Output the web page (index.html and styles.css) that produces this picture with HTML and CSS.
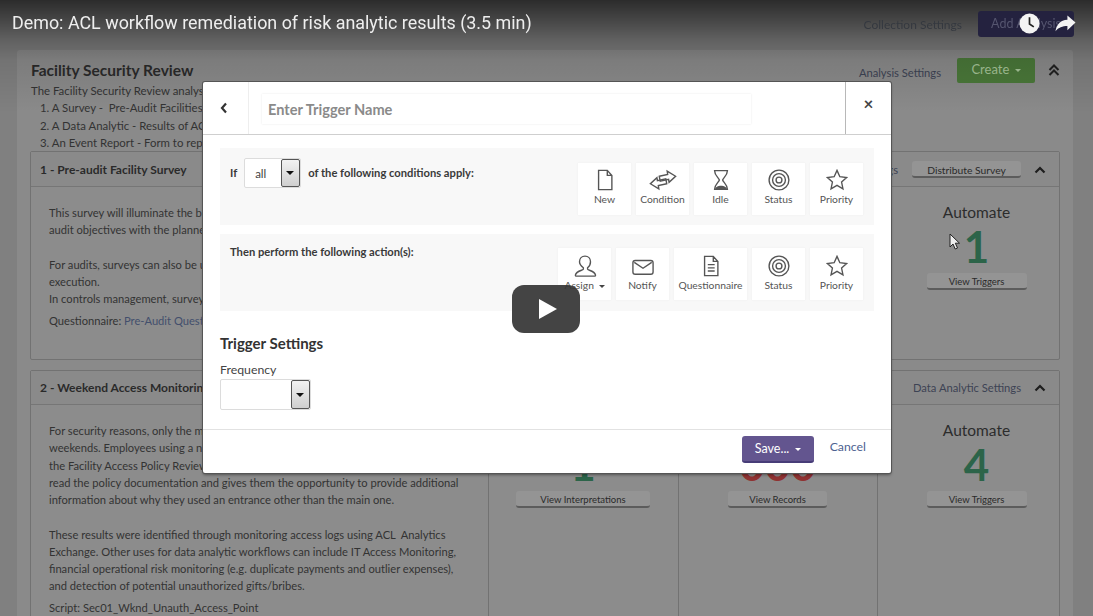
FILE: index.html
```html
<!DOCTYPE html>
<html lang="en">
<head>
	<meta charset="UTF-8">
	<title>Demo: ACL workflow remediation of risk analytic results</title>
	<link rel="stylesheet" href="styles.css">
</head>
<body>
	<svg class="defs" width="0" height="0">
		<symbol id="i-star" viewBox="0 0 24 24"><path d="M12 1.500l3.100 6.900 7.400.9-5.500 5 1.500 7.300-6.500-3.700-6.500 3.700 1.500-7.300-5.500-5 7.400-.9z"/></symbol>
		<symbol id="i-target" viewBox="0 0 24 24"><circle cx="12" cy="12" r="10.800"/><circle cx="12" cy="12" r="7"/><circle cx="12" cy="12" r="3.200"/></symbol>
		<symbol id="i-up" viewBox="0 0 12 8"><path d="M1.500 6.500L6 2l4.500 4.500"/></symbol>
	</svg>

	<div class="screen">
		<div class="topbar">
			<a class="link">Collection Settings</a>
			<span class="btn-add">Add Analysis</span>
		</div>

		<div class="card">
			<div class="card-head">
				<h1>Facility Security Review</h1>
				<a class="link">Analysis Settings</a>
				<span class="btn-create">Create <i class="caret"></i></span>
				<svg class="chev-double" viewBox="0 0 12 12"><path d="M1.500 6L6 1.500 10.500 6M1.500 11L6 6.500l4.500 4.500"/></svg>
			</div>
			<div class="desc">The Facility Security Review analysis</div>
			<div class="desc indent">1. A Survey -&nbsp; Pre-Audit Facilities</div>
			<div class="desc indent">2. A Data Analytic - Results of ACL</div>
			<div class="desc indent">3. An Event Report - Form to report</div>

			<div class="panel panel-one">
				<div class="panel-head">
					<h2>1 - Pre-audit Facility Survey</h2>
					<a class="link dim">Survey Settings</a>
					<span class="btn-gray btn-dist">Distribute Survey</span>
					<svg class="chev"><use href="#i-up"/></svg>
				</div>
				<div class="panel-body">
					<div class="col-text">
						<p>This survey will illuminate the b<br>audit objectives with the planne</p>
						<p>For audits, surveys can also be u<br>execution.<br>In controls management, survey</p>
						<p class="meta">Questionnaire: <a class="blue">Pre-Audit Questionnaire</a></p>
					</div>
					<div class="col"></div>
					<div class="col"></div>
					<div class="col col-last">
						<div class="col-title">Automate</div>
						<div class="num green">1</div>
						<span class="btn-gray btn-view">View Triggers</span>
					</div>
				</div>
			</div>

			<div class="panel panel-two">
				<div class="panel-head">
					<h2>2 - Weekend Access Monitoring</h2>
					<a class="link">Data Analytic Settings</a>
					<svg class="chev"><use href="#i-up"/></svg>
				</div>
				<div class="panel-body">
					<div class="col-text">
						<p>For security reasons, only the m<br>weekends. Employees using a n<br>the Facility Access Policy Review<br>read the policy documentation and gives them the opportunity to provide additional<br>information about why they used an entrance other than the main one.</p>
						<p>These results were identified through monitoring access logs using ACL&nbsp; Analytics<br>Exchange. Other uses for data analytic workflows can include IT Access Monitoring,<br>financial operational risk monitoring (e.g. duplicate payments and outlier expenses),<br>and detection of potential unauthorized gifts/bribes.</p>
						<p class="meta">Script: Sec01_Wknd_Unauth_Access_Point</p>
					</div>
					<div class="col">
						<div class="col-title">&nbsp;</div>
						<div class="num green">1</div>
						<span class="btn-gray btn-interp">View Interpretations</span>
					</div>
					<div class="col">
						<div class="col-title">&nbsp;</div>
						<div class="num red">000</div>
						<span class="btn-gray btn-rec">View Records</span>
					</div>
					<div class="col col-last">
						<div class="col-title">Automate</div>
						<div class="num green">4</div>
						<span class="btn-gray btn-view">View Triggers</span>
					</div>
				</div>
			</div>
		</div>

		<svg class="cursor" viewBox="0 0 12 18"><path d="M1 1v13l3-3 2.200 5 2.300-1-2.200-4.800H10.500z"/></svg>

		<div class="shade"></div>

		<div class="modal">
			<div class="modal-head">
				<div class="modal-back"><svg viewBox="0 0 8 12"><path d="M6 1.500L2 6l4 4.500"/></svg></div>
				<div class="modal-name"><span class="name-input">Enter Trigger Name</span></div>
				<div class="modal-close">&times;</div>
			</div>
			<div class="modal-body">
				<div class="rule">
					<span class="rule-text">If</span>
					<span class="pick pick-all"><span class="pick-val">all</span><span class="pick-arrow"></span></span>
					<span class="rule-text">of the following conditions apply:</span>
					<div class="tiles">
						<div class="tile">
							<svg class="ic" viewBox="0 0 24 24"><path d="M5 1.500h9.500L19.500 7v15.500H5zM14.500 1.500V7h5"/></svg>
							New
						</div>
						<div class="tile">
							<svg class="ic ic-wide" viewBox="0 0 30 22"><path d="M19 15l-9 2 .5 3.500L1.500 15l7-6.500.5 3.200 9-2z"/><path d="M11 7l9-2-.5-3.500 9 5.500-7 6.500-.5-3.200-9 2z"/></svg>
							Condition
						</div>
						<div class="tile">
							<svg class="ic" viewBox="0 0 24 24"><path d="M5 1.800h14c0 5.200-4.600 7.700-5.200 10.200.6 2.500 5.200 5 5.200 10.200H5c0-5.200 4.600-7.700 5.200-10.200C9.600 9.500 5 7 5 1.800z"/><path class="solid" d="M5.500 22c.3-2.200 3.300-3.800 6.500-3.800s6.200 1.600 6.500 3.800z"/></svg>
							Idle
						</div>
						<div class="tile">
							<svg class="ic"><use href="#i-target"/></svg>
							Status
						</div>
						<div class="tile">
							<svg class="ic"><use href="#i-star"/></svg>
							Priority
						</div>
					</div>
				</div>
				<div class="rule rule-then">
					<span class="rule-text then-text">Then perform the following action(s):</span>
					<div class="tiles">
						<div class="tile">
							<svg class="ic ic-wide" viewBox="0 0 26 24"><path d="M13 1.200c3.500 0 6 2.600 6 6.200 0 3-1.600 5.300-3.200 6.600v1.500c0 1.200 7.700 1.500 8.700 6.500 0 .7-.5 1-1 1H3.500c-.5 0-1-.3-1-1 1-5 8.700-5.300 8.700-6.500V14C9.600 12.700 7 10.400 7 7.400c0-3.600 2.500-6.200 6-6.200z"/></svg>
							<span>Assign <i class="caret dark"></i></span>
						</div>
						<div class="tile">
							<svg class="ic ic-wide" viewBox="0 0 26 24"><rect x="2" y="6" width="22" height="15" rx="2.500"/><path d="M3.500 8l9.500 6.500L22.500 8"/></svg>
							Notify
						</div>
						<div class="tile tile-wide">
							<svg class="ic" viewBox="0 0 24 24"><path d="M5 1.500h9.500L19.500 7v15.500H5zM14.500 1.500V7h5M8.500 10.500h7.500M8.500 14h7.500M8.500 17.500h7.500"/></svg>
							Questionnaire
						</div>
						<div class="tile">
							<svg class="ic"><use href="#i-target"/></svg>
							Status
						</div>
						<div class="tile">
							<svg class="ic"><use href="#i-star"/></svg>
							Priority
						</div>
					</div>
				</div>
				<h3>Trigger Settings</h3>
				<div class="field-label">Frequency</div>
				<span class="pick pick-freq"><span class="pick-val"></span><span class="pick-arrow"></span></span>
			</div>
			<div class="modal-foot">
				<span class="btn-save">Save... <i class="caret"></i></span>
				<a class="cancel">Cancel</a>
			</div>
		</div>
	</div>

	<!-- video player chrome -->
	<div class="yt-title">Demo: ACL workflow remediation of risk analytic results (3.5 min)</div>
	<svg class="yt-clock" viewBox="0 0 22 22"><circle cx="11" cy="11" r="10.500"/><path d="M11 4.500V11.500l4.500 3"/></svg>
	<svg class="yt-share" viewBox="0 0 22 17"><path d="M21.500 7.500L13 0v4.500C5.500 4.800 1.500 10 .5 16.500 3.500 12.500 8 11 13 11v4.500z"/></svg>
	<div class="yt-play"><svg viewBox="0 0 18 20"><path d="M0 0l18 10L0 20z"/></svg></div>
</body>
</html>
```

FILE: styles.css
```css
html, body {
	margin: 0;
	height: 616px;
	overflow: hidden;
}
body {
	position: relative;
	background: #808080;
	font-family: Lato, "Open Sans", sans-serif;
	font-size: 12px;
	color: #303030;
}
.defs {
	position: absolute;
}
.screen {
	height: 616px;
	filter: blur(0.35px);
}

/* dimmed page behind the dialog */
.topbar {
	position: relative;
	z-index: 1;
	display: flex;
	justify-content: flex-end;
	align-items: center;
	gap: 16px;
	height: 26px;
	padding: 11px 19px 13px 0;
}
.link {
	color: #3d4354;
	font-size: 11.200px;
	white-space: nowrap;
}
.topbar .link {
	font-size: 12px;
	color: #34383f;
}
.btn-add {
	width: 96px;
	height: 26px;
	line-height: 25px;
	text-align: center;
	border-radius: 3px;
	background: #24223f;
	color: #55556f;
	font-size: 12.500px;
}
.card {
	height: 558px;
	margin: 0 20px 0 17px;
	padding: 8px 13px 0 13px;
	background: #8a8a8a;
	border-radius: 3px 3px 0 0;
}
.card-head {
	display: flex;
	align-items: center;
	height: 24px;
}
.card-head h1 {
	flex: 1;
	margin: 0 0 0 1px;
	font-size: 15.500px;
	font-weight: 700;
	color: #2a2a2a;
}
.card-head .link {
	margin-top: 4px;
}
.btn-create {
	width: 78px;
	height: 25px;
	line-height: 23px;
	margin-left: 16px;
	text-align: center;
	border-radius: 2px;
	background: #4a7839;
	color: #a6c498;
	font-size: 13px;
}
.chev-double {
	width: 12px;
	height: 12px;
	margin: 0 0 0 13px;
	fill: none;
	stroke: #222;
	stroke-width: 2;
}
.desc {
	height: 17.300px;
	line-height: 17.300px;
	padding-left: 1px;
	font-size: 11.400px;
	white-space: nowrap;
	color: #333;
}
.indent {
	padding-left: 10px;
}
.panel {
	border: 1px solid #727272;
	border-radius: 2px;
	background: #8c8c8c;
}
.panel-one {
	height: 207px;
	margin-bottom: 10px;
}
.panel-head {
	display: flex;
	align-items: center;
	height: 35px;
	padding: 1px 13px 0 9px;
	box-sizing: border-box;
	border-bottom: 1px solid #767676;
	background: #8a8a8a;
}
.panel-two .panel-head {
	height: 34px;
	padding-top: 0;
}
.panel-head h2 {
	flex: 1;
	margin: 0;
	font-size: 12px;
	font-weight: 700;
	color: #2a2a2a;
}
.panel-head .link {
	margin-right: 12px;
}
.chev {
	width: 12px;
	height: 8px;
	fill: none;
	stroke: #1e1e1e;
	stroke-width: 2.200;
	margin-left: 1px;
}
.panel-one .chev {
	margin-left: 13px;
}
.panel-head .dim {
	margin-right: 14px;
}
.panel-body {
	display: grid;
	grid-template-columns: 457px 190px 199px 1fr;
	height: 100%;
}
.col-text {
	padding: 17px 0 0 18px;
	line-height: 17.250px;
	font-size: 11.170px;
	white-space: nowrap;
	color: #333;
}
.col-text p {
	margin: 0 0 17.250px;
}
.col-text .meta {
	margin-top: -13px;
}
.blue {
	color: #434f6c;
}
.col {
	display: flex;
	flex-direction: column;
	align-items: center;
	padding: 15px 1px 0 0;
	border-left: 1px solid #727272;
}
.col-last {
	padding-left: 17px;
}
.col-title {
	height: 20px;
	line-height: 20px;
	font-size: 15.500px;
	color: #2c2c2c;
}
.num {
	height: 44px;
	line-height: 44px;
	margin: 2px 0 5px;
	font-size: 44px;
	font-weight: 700;
}
.green {
	color: #2c6449;
}
.red {
	color: #8f3232;
}
.btn-gray {
	display: block;
	height: 14px;
	padding-top: 1px;
	line-height: 16px;
	text-align: center;
	border-radius: 3px;
	border-bottom: 2px solid #5c5c5c;
	background: #949494;
	color: #2a2a2a;
	font-size: 9.500px;
}
.btn-view {
	width: 100px;
}
.btn-interp {
	width: 134px;
}
.btn-rec {
	width: 99px;
}
.btn-dist {
	width: 109px;
	font-size: 10.300px;
}
.cursor {
	position: absolute;
	left: 949px;
	top: 233px;
	width: 12px;
	height: 18px;
	fill: #eee;
	stroke: #222;
	stroke-width: 1;
}

/* video gradient sits over the page, dialog stays clear of it */
.shade {
	position: absolute;
	left: 0;
	top: 0;
	width: 100%;
	height: 112px;
	background: linear-gradient(rgba(0, 0, 0, 0.66), rgba(0, 0, 0, 0.42) 21%, rgba(0, 0, 0, 0.24) 36%, rgba(0, 0, 0, 0.1) 54%, rgba(0, 0, 0, 0));
}

/* dialog */
.modal {
	position: absolute;
	left: 203px;
	top: 82px;
	width: 688px;
	height: 391px;
	background: #fff;
	border-radius: 2px;
	box-shadow: 0 0 0 1px #555, 0 2px 3px rgba(0, 0, 0, 0.4);
	color: #333;
}
.modal-head {
	display: flex;
	height: 52px;
	border-bottom: 1px solid #cfcfcf;
}
.modal-back {
	display: flex;
	align-items: center;
	justify-content: center;
	width: 46px;
	padding: 0 4px 0 0;
	box-sizing: border-box;
	border-right: 1px solid #eee;
}
.modal-back svg {
	width: 8px;
	height: 12px;
	fill: none;
	stroke: #333;
	stroke-width: 2.200;
}
.modal-name {
	flex: 1;
	padding: 12px 0 0 13px;
}
.name-input {
	display: block;
	width: 483px;
	height: 30px;
	line-height: 31px;
	padding-left: 6px;
	box-shadow: 0 0 2px #e8e8e8;
	font-size: 14.600px;
	font-weight: 700;
	color: #8a8a8a;
}
.modal-close {
	width: 45px;
	padding-top: 9px;
	border-left: 1px solid #b8b8b8;
	text-align: center;
	font-size: 17px;
	line-height: 25px;
	font-weight: 700;
	color: #444;
}
.modal-body {
	height: 281px;
	padding: 13px 17px 0;
	border-bottom: 1px solid #e2e2e2;
}
.rule {
	display: flex;
	align-items: flex-start;
	gap: 7px;
	height: 77px;
	margin-bottom: 9px;
	padding: 10px 11px 0 10px;
	box-sizing: border-box;
	background: #f8f8f8;
}
.rule-text {
	margin-top: 8px;
	font-size: 11.200px;
	font-weight: 700;
	color: #3a3a3a;
	white-space: nowrap;
}
.rule .then-text {
	margin-top: 1px;
}
.pick {
	display: flex;
	height: 30px;
	box-sizing: border-box;
	border: 1px solid #dcdcdc;
	border-radius: 2px;
	background: #fff;
}
.pick-all {
	width: 57px;
}
.pick-freq {
	width: 91px;
	height: 31px;
}
.pick-val {
	flex: 1;
	padding-left: 10px;
	line-height: 30px;
	font-size: 11.500px;
	color: #444;
}
.pick-arrow {
	position: relative;
	width: 17px;
	border: 1px solid #555;
	border-radius: 2px;
	background: linear-gradient(#f2f2f2, #cfcfcf);
}
.pick-arrow:after {
	content: "";
	position: absolute;
	left: 4px;
	top: 50%;
	margin-top: -2px;
	border: 4px solid transparent;
	border-top: 4px solid #111;
	border-bottom: 0;
}
.tiles {
	display: flex;
	gap: 5px;
	margin: 5px 0 0 auto;
}
.rule-then .tiles {
	margin-top: 4px;
}
.rule-then .tile {
	padding-top: 7px;
}
.tile {
	display: flex;
	flex-direction: column;
	align-items: center;
	width: 53px;
	height: 52px;
	padding-top: 6px;
	box-sizing: border-box;
	background: #fff;
	box-shadow: 0 0 2px #eee;
	font-size: 10.300px;
	line-height: 15px;
	color: #555;
	white-space: nowrap;
}
.tile-wide {
	width: 73px;
}
.ic {
	width: 22px;
	height: 22px;
	margin-bottom: 1px;
	fill: none;
	stroke: #555;
	stroke-width: 1.500;
	flex: none;
}
.ic-wide {
	width: 28px;
}
.ic .solid {
	fill: #555;
	stroke: none;
}
h3 {
	margin: 22px 0 0;
	height: 20px;
	line-height: 20px;
	font-size: 15px;
	font-weight: 700;
	color: #333;
}
.field-label {
	margin: 7px 0 1px;
	height: 18px;
	line-height: 19px;
	font-size: 12.300px;
	color: #444;
}
.modal-foot {
	display: flex;
	align-items: flex-start;
	justify-content: flex-end;
	gap: 16px;
	padding: 6px 25px 0 0;
}
.btn-save {
	width: 72px;
	height: 25px;
	line-height: 25px;
	text-align: center;
	border-radius: 3px;
	border-bottom: 2px solid #473d78;
	background: #63558f;
	color: #fff;
	font-size: 12.500px;
}
.cancel {
	margin-top: 1px;
	line-height: 20px;
	font-size: 12.300px;
	color: #4d6291;
}
.caret {
	display: inline-block;
	margin-left: 2px;
	vertical-align: middle;
	border: 3.500px solid transparent;
	border-top: 3.500px solid currentColor;
	border-bottom: 0;
}
.caret.dark {
	color: #444;
}

/* player chrome */
.yt-title {
	position: absolute;
	left: 12px;
	top: 11px;
	font-family: Roboto, sans-serif;
	font-size: 17.900px;
	line-height: 24px;
	color: #eee;
	white-space: nowrap;
}
.yt-clock {
	position: absolute;
	left: 1019px;
	top: 13px;
	width: 21px;
	height: 21px;
	fill: #f4f4f4;
	stroke: none;
}
.yt-clock path {
	fill: none;
	stroke: #222;
	stroke-width: 1.800;
}
.yt-share {
	position: absolute;
	left: 1055px;
	top: 15px;
	width: 21px;
	height: 17px;
	fill: #f4f4f4;
}
.yt-play {
	position: absolute;
	left: 512px;
	top: 285px;
	display: flex;
	align-items: center;
	justify-content: center;
	width: 68px;
	height: 48px;
	padding-left: 4px;
	box-sizing: border-box;
	border-radius: 12px;
	background: rgba(52, 52, 52, 0.92);
}
.yt-play svg {
	width: 18px;
	height: 20px;
	fill: #fff;
}
```
